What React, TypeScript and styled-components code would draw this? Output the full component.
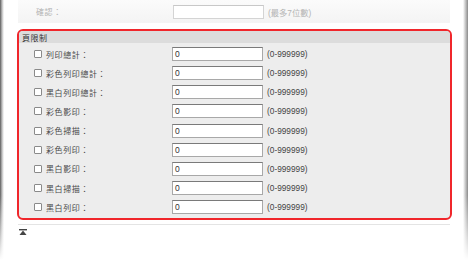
import React from "react";
import styled, { createGlobalStyle } from "styled-components";

const GlobalStyle = createGlobalStyle`
  html, body {
    margin: 0;
    padding: 0;
    background: #fff;
  }
  body {
    font-family: "Liberation Sans", "Noto Sans CJK TC", sans-serif;
  }
`;

const Page = styled.div`
  width: 468px;
  height: 260px;
  box-sizing: border-box;
  padding: 0 16px 0 17px;
  background:
    linear-gradient(to bottom, rgba(255, 255, 255, 0) 75%, #fff 100%),
    linear-gradient(to right, #5a5a5a 0, #bdbdbd 2px, #fff 4px, #fff 463px, #d0d0d0 465px, #8a8a8a 468px);
`;

const TopRow = styled.div`
  display: grid;
  grid-template-columns: 137px 91px auto;
  align-items: center;
  height: 23px;
  margin-left: 1px;
  width: 432px;
  box-sizing: border-box;
  padding-left: 18px;
  background: linear-gradient(to bottom, #fbfbfb, #f4f4f4);
  color: #b0b0b0;
  font-size: 8px;
`;

const Label = styled.span<{ $muted?: boolean }>`
  font-family: "Noto Sans CJK TC", "Liberation Sans", sans-serif;
  letter-spacing: 0.6px;
  color: ${(p) => (p.$muted ? "#b4b4b4" : "#4a4a4a")};
  white-space: nowrap;
`;

const Field = styled.div<{ $muted?: boolean }>`
  height: 14px;
  box-sizing: border-box;
  background: #fff;
  border: 1px solid ${(p) => (p.$muted ? "#d4d4d4" : "#a8a8a8")};
  border-top-color: ${(p) => (p.$muted ? "#c8c8c8" : "#7a7a7a")};
  font-size: 8.5px;
  line-height: 12px;
  padding-left: 2px;
  color: #333;
`;

const Hint = styled.span<{ $muted?: boolean }>`
  margin-left: 4px;
  font-size: 8.3px;
  color: ${(p) => (p.$muted ? "#b4b4b4" : "#444")};
  white-space: nowrap;
  font-family: "Liberation Sans", "Noto Sans CJK TC", sans-serif;
`;

const Box = styled.section`
  margin-top: 6px;
  width: 435px;
  height: 191px;
  box-sizing: border-box;
  border: 2px solid #f0262b;
  border-radius: 6px;
  background: #ededed;
  overflow: hidden;
`;

const BoxHeader = styled.div`
  height: 12px;
  background: #dcdcdc;
  padding-left: 3px;
  font-size: 8px;
  line-height: 13px;
  color: #333;
  font-family: "Noto Sans CJK TC", sans-serif;
  letter-spacing: 0.5px;
`;

const Rows = styled.div`
  padding-top: 1.5px;
`;

const Row = styled.div`
  display: grid;
  grid-template-columns: 12px 126px 91px auto;
  align-items: center;
  height: 19.15px;
  padding-left: 15px;
  font-size: 8px;
`;

const Check = styled.span`
  width: 8px;
  height: 8px;
  box-sizing: border-box;
  border: 1px solid #8a8a8a;
  border-radius: 1px;
  background: #fff;
`;

const Divider = styled.div`
  margin: 4px 0 0 1px;
  width: 432px;
  height: 1px;
  background: #e4e4e4;
`;

const TopLink = styled.div`
  margin: 4px 0 0 2px;
  display: flex;
`;

const rows = [
  "列印總計：",
  "彩色列印總計：",
  "黑白列印總計：",
  "彩色影印：",
  "彩色掃描：",
  "彩色列印：",
  "黑白影印：",
  "黑白掃描：",
  "黑白列印：",
];

export default function App() {
  return (
    <>
      <GlobalStyle />
      <Page>
        <TopRow>
          <Label $muted>確認：</Label>
          <Field $muted />
          <Hint $muted>(最多7位數)</Hint>
        </TopRow>
        <Box>
          <BoxHeader>頁限制</BoxHeader>
          <Rows>
            {rows.map((r) => (
              <Row key={r}>
                <Check />
                <Label>{r}</Label>
                <Field>0</Field>
                <Hint>(0-999999)</Hint>
              </Row>
            ))}
          </Rows>
        </Box>
        <Divider />
        <TopLink>
          <svg width="8" height="6" viewBox="0 0 8 6">
            <rect x="0" y="0" width="8" height="1.4" fill="#444" />
            <polygon points="4,1.6 0.5,6 7.5,6" fill="#444" />
          </svg>
        </TopLink>
      </Page>
    </>
  );
}
